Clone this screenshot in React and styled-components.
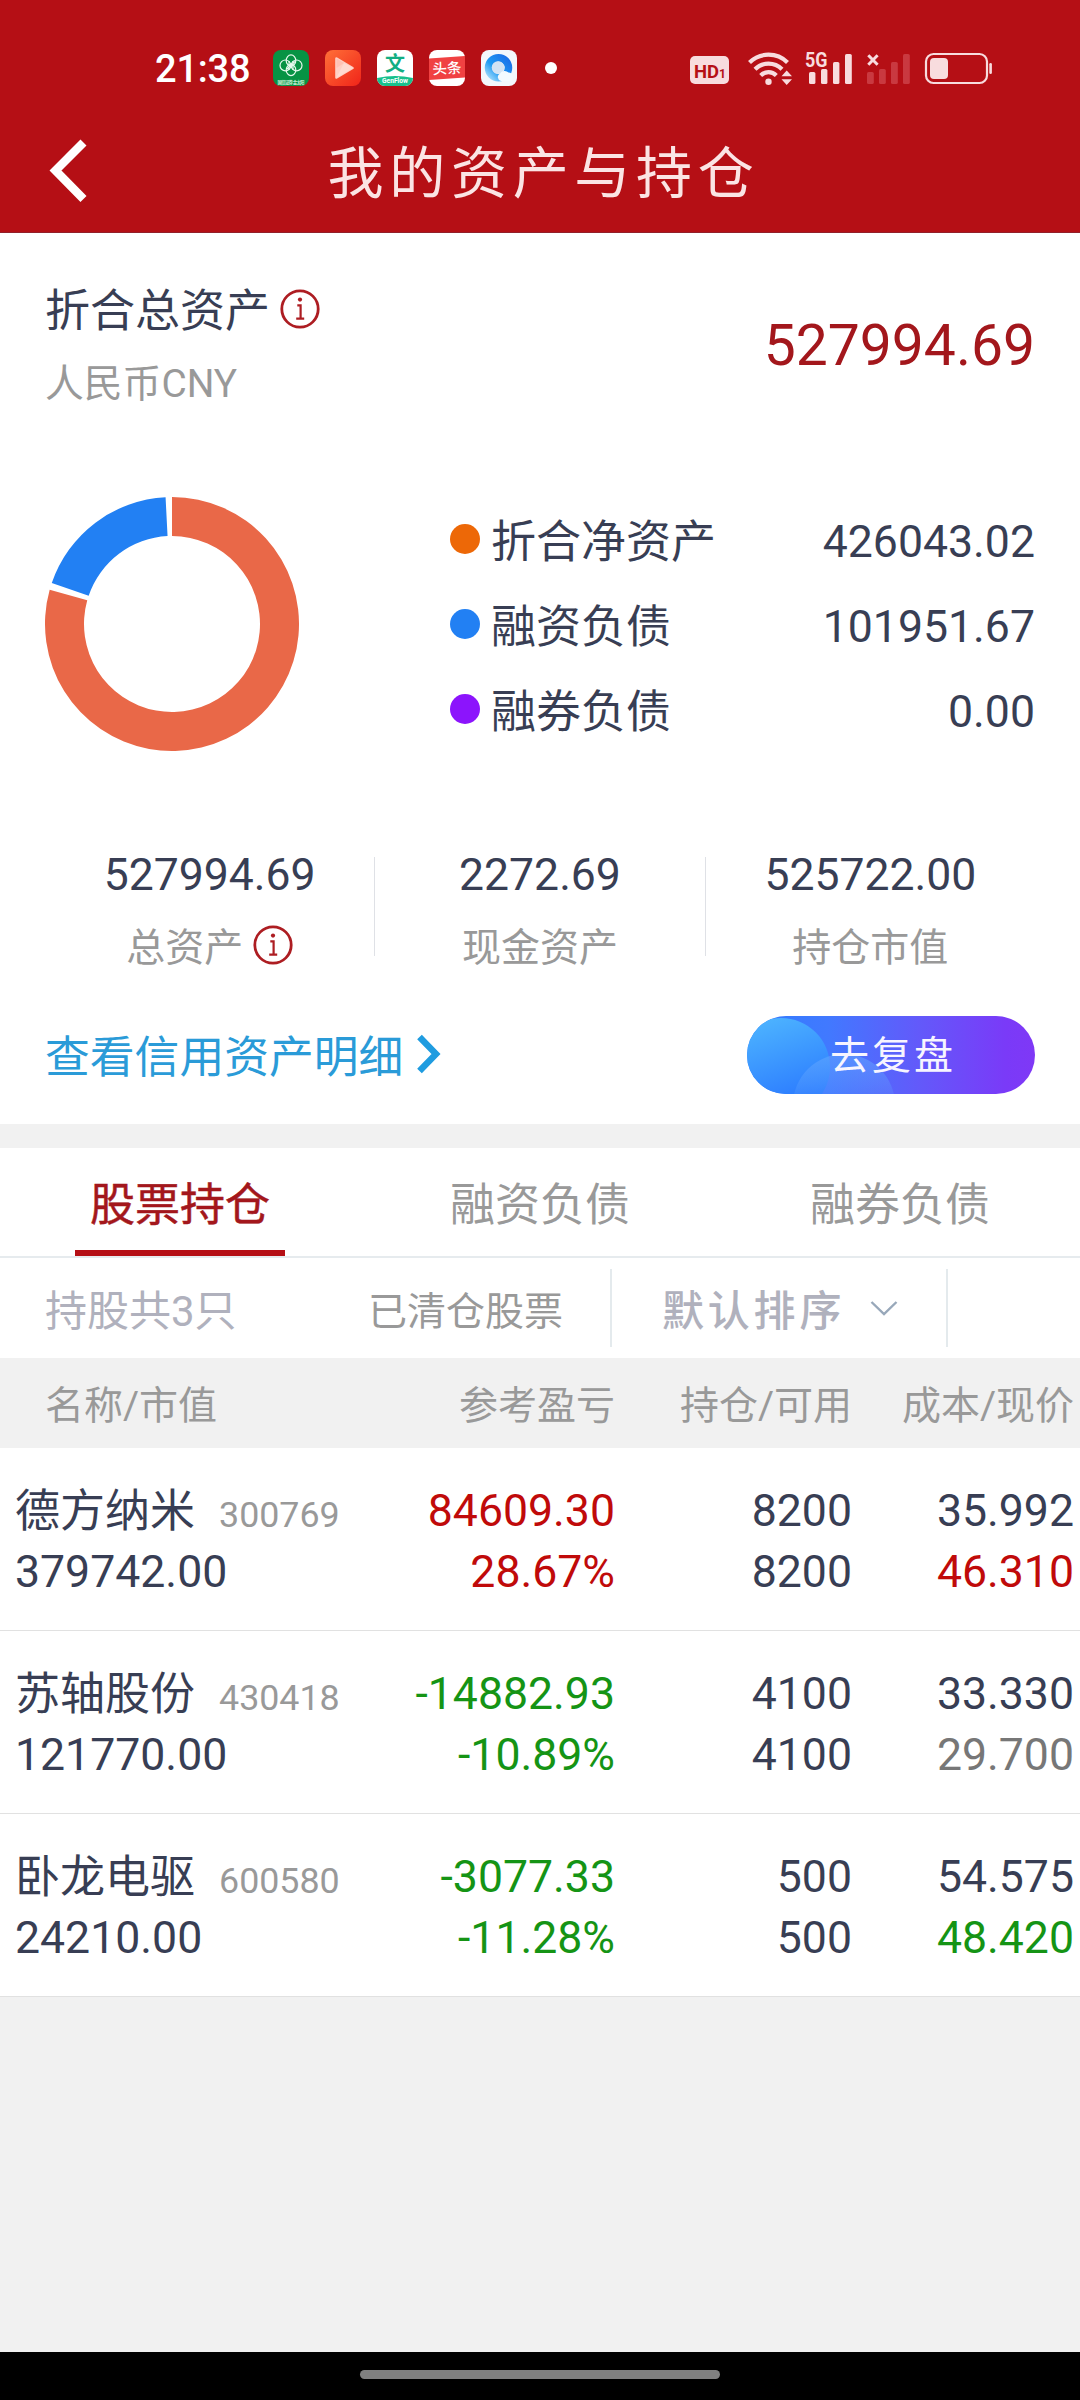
import React from 'react';
import styled, { createGlobalStyle } from 'styled-components';

const GlobalStyle = createGlobalStyle`
	* {
		box-sizing: border-box;
	}
	body {
		margin: 0;
		background: #f1f1f1;
		font-family: Roboto, 'Noto Sans CJK SC', sans-serif;
		color: #383e54;
	}
`;

const Page = styled.div`
	width: 1080px;
	height: 2400px;
	display: flex;
	flex-direction: column;
	background: #f1f1f1;
	overflow: hidden;
`;

const Header = styled.header`
	height: 233px;
	background: #b50f15;
	border-bottom: 1px solid #92202a;
`;

const StatusBar = styled.div`
	height: 110px;
	padding: 26px 87px 0 155px;
	display: flex;
	align-items: center;
	justify-content: space-between;
`;

const StatusGroup = styled.div`
	display: flex;
	align-items: center;
`;

const Time = styled.span`
	width: 118px;
	padding-top: 2px;
	color: #fff;
	font-size: 38px;
	font-weight: 500;
	line-height: 44px;
	letter-spacing: -0.2px;
`;

const AppIcon = styled.svg`
	width: 36px;
	height: 36px;
	margin-right: 16px;
`;

const MoreDot = styled.span`
	width: 12px;
	height: 12px;
	margin-left: 12px;
	border-radius: 50%;
	background: #fff;
`;

const NavBar = styled.nav`
	height: 122px;
	display: grid;
	grid-template-columns: 150px 1fr 150px;
	align-items: center;
`;

const BackIcon = styled.svg`
	width: 40px;
	height: 64px;
	margin-left: 48px;
`;

const Title = styled.h1`
	margin: 5px 0 0;
	padding-left: 7px;
	text-align: center;
	color: #fbe4e4;
	font-size: 56px;
	font-weight: 400;
	letter-spacing: 5.7px;
	line-height: 80px;
`;

const Summary = styled.section`
	height: 891px;
	padding: 47px 45px 0;
	background: #fff;
`;

const SummaryHead = styled.div`
	display: flex;
	justify-content: space-between;
	align-items: center;
`;

const SummaryLabel = styled.div`
	display: flex;
	align-items: center;
	font-size: 45px;
	line-height: 66px;
	height: 64px;
`;

const InfoIcon = styled.svg`
	width: 40px;
	height: 40px;
	margin: 0 0 ${props => props.$lift || 6}px 10px;
`;

const Currency = styled.div`
	margin-top: 12px;
	font-size: 38.8px;
	line-height: 56px;
	color: #999;
`;

const TotalAmount = styled.div`
	font-size: 57px;
	line-height: 64px;
	color: #a3171c;
`;

const ChartRow = styled.div`
	margin-top: 85px;
	height: 257px;
	display: flex;
	justify-content: space-between;
`;

const Donut = styled.svg`
	width: 254px;
	height: 254px;
`;

const Legend = styled.ul`
	width: 585px;
	margin: 2px 0 0;
	padding: 0;
	list-style: none;
`;

const LegendItem = styled.li`
	height: 85px;
	display: flex;
	align-items: center;
`;

const LegendDot = styled.span`
	width: 30px;
	height: 30px;
	margin: 0 11px 5px 0;
	border-radius: 50%;
	background: ${props => props.$color};
`;

const LegendName = styled.span`
	font-size: 45px;
	line-height: 60px;
	padding-top: 2px;
`;

const LegendValue = styled.span`
	margin-left: auto;
	font-size: 44.6px;
	line-height: 60px;
`;

const Stats = styled.div`
	margin-top: 93px;
	height: 128px;
	display: flex;
`;

const Stat = styled.div`
	flex: 1;
	display: flex;
	flex-direction: column;
	align-items: center;
`;

const StatValue = styled.div`
	font-size: 44.5px;
	line-height: 56px;
`;

const StatLabel = styled.div`
	margin-top: 18px;
	display: flex;
	align-items: center;
	font-size: 39px;
	line-height: 54px;
	color: #999;
`;

const StatDivider = styled.div`
	width: 1px;
	height: 99px;
	margin-top: 10px;
	background: #dfe1e6;
`;

const Actions = styled.div`
	margin-top: 41px;
	height: 78px;
	display: flex;
	justify-content: space-between;
	align-items: center;
`;

const DetailLink = styled.a`
	display: flex;
	align-items: center;
	color: #2a9bd8;
	font-size: 44.8px;
	line-height: 60px;
	padding-top: 6px;
`;

const LinkArrow = styled.svg`
	width: 26px;
	height: 40px;
	margin: 0 0 8px 13px;
`;

const ReviewButton = styled.button`
	position: relative;
	width: 288px;
	height: 78px;
	padding: 0;
	border: 0;
	border-radius: 39px;
	overflow: hidden;
	background: linear-gradient(90deg, #2f7dff 0%, #4179ff 28%, #6359fa 60%, #7a3af8 90%, #7f38f6 100%);
	font-family: inherit;
`;

const ButtonArt = styled.svg`
	position: absolute;
	left: 0;
	top: 0;
	width: 288px;
	height: 78px;
`;

const ButtonText = styled.span`
	position: relative;
	padding-left: 4px;
	color: #f7f5ff;
	font-size: 39px;
	letter-spacing: 3px;
	line-height: 80px;
`;

const Tabs = styled.div`
	margin-top: 24px;
	height: 110px;
	display: flex;
	background: #fff;
	border-bottom: 2px solid #e6ebee;
`;

const Tab = styled.div`
	width: 360px;
	height: 108px;
	display: flex;
	flex-direction: column;
	align-items: center;
	justify-content: space-between;
	padding-top: 26px;
	font-size: 45px;
	line-height: 64px;
	color: ${props => (props.$active ? '#a3171c' : '#999')};
	-webkit-text-stroke: ${props => (props.$active ? '0.5px' : '0')};
	&::after {
		content: '';
		width: 210px;
		height: 6px;
		background: ${props => (props.$active ? '#b50f15' : 'transparent')};
	}
`;

const Filters = styled.div`
	height: 100px;
	display: flex;
	align-items: center;
	padding-left: 45px;
	background: #fff;
`;

const HoldCount = styled.div`
	width: 323px;
	padding-top: 8px;
	font-size: 42px;
	line-height: 60px;
	color: #b0b1bd;
`;

const Cleared = styled.div`
	width: 242px;
	padding-top: 8px;
	font-size: 39px;
	line-height: 60px;
	color: #999;
`;

const FilterDivider = styled.div`
	width: 2px;
	height: 78px;
	background: #e4eaed;
`;

const Sort = styled.div`
	width: 334px;
	padding-left: 50px;
	display: flex;
	align-items: center;
	color: #b0b1bd;
	font-size: 42px;
	font-weight: 500;
	letter-spacing: 3.8px;
	line-height: 60px;
	span {
		padding-top: 8px;
	}
	svg {
		width: 28px;
		height: 18px;
		margin-left: 25px;
	}
`;

const Grid = styled.div`
	display: grid;
	grid-template-columns: 380px 235px 237px 222px;
`;

const TableHead = styled(Grid)`
	height: 90px;
	padding-top: 6px;
	font-size: 39px;
	line-height: 84px;
	color: #999;
	text-align: right;
`;

const HeadName = styled.span`
	padding-left: 45px;
	text-align: left;
`;

const StockRow = styled(Grid)`
	height: 183px;
	padding-top: 33px;
	background: #fff;
	border-bottom: 1px solid #e1e1e1;
	font-size: 44.6px;
	line-height: 61px;
`;

const NameCell = styled.div`
	padding-left: 15px;
`;

const NameLine = styled.div`
	height: 61px;
	display: flex;
	align-items: baseline;
	font-size: 45px;
`;

const Code = styled.span`
	margin-left: 24px;
	font-size: 35.8px;
	color: #999;
`;

const Cell = styled.div`
	text-align: right;
	color: ${props => props.$color || '#383e54'};
`;

const Line = styled.div`
	height: 61px;
	color: ${props => props.$color || 'inherit'};
`;

const GestureBar = styled.div`
	height: 48px;
	margin-top: auto;
	padding-top: 18px;
	background: #000;
	&::after {
		content: '';
		display: block;
		width: 360px;
		height: 9px;
		margin: 0 auto;
		border-radius: 5px;
		background: #808080;
	}
`;

const RED = '#c00a0a';
const GREEN = '#159415';

const legend = [
	{ name: '折合净资产', value: '426043.02', color: '#ed6807' },
	{ name: '融资负债', value: '101951.67', color: '#2280f3' },
	{ name: '融券负债', value: '0.00', color: '#8c14fc' },
];

const stocks = [
	{
		name: '德方纳米',
		code: '300769',
		market: '379742.00',
		profit: '84609.30',
		rate: '28.67%',
		hold: '8200',
		cost: '35.992',
		price: '46.310',
		color: RED,
		priceColor: RED,
	},
	{
		name: '苏轴股份',
		code: '430418',
		market: '121770.00',
		profit: '-14882.93',
		rate: '-10.89%',
		hold: '4100',
		cost: '33.330',
		price: '29.700',
		color: GREEN,
		priceColor: '#777',
	},
	{
		name: '卧龙电驱',
		code: '600580',
		market: '24210.00',
		profit: '-3077.33',
		rate: '-11.28%',
		hold: '500',
		cost: '54.575',
		price: '48.420',
		color: GREEN,
		priceColor: GREEN,
	},
];

// ring segment between two angles, clockwise from 12 o'clock
const ringPath = (from, to, outer = 127, inner = 88) => {
	const point = (r, deg) => {
		const rad = (deg * Math.PI) / 180;
		return `${127 + r * Math.sin(rad)} ${127 - r * Math.cos(rad)}`;
	};
	const large = to - from > 180 ? 1 : 0;
	return `M${point(outer, from)}A${outer} ${outer} 0 ${large} 1 ${point(outer, to)}L${point(inner, to)}A${inner} ${inner} 0 ${large} 0 ${point(inner, from)}Z`;
};

const Info = ({ lift }) => (
	<InfoIcon viewBox="0 0 40 40" fill="none" $lift={lift}>
		<circle cx="20" cy="20" r="18.2" stroke="#ad1d22" strokeWidth="2.8" />
		<circle cx="20" cy="10.6" r="2.1" fill="#ad1d22" />
		<path d="M17.3 16.4H20.6V29.5M16.2 29.6H24.2" stroke="#ad1d22" strokeWidth="2.2" />
	</InfoIcon>
);

const AppIcons = () => (
	<>
		<AppIcon viewBox="0 0 36 36">
			<rect width="36" height="36" rx="8" fill="#079344" />
			<g fill="none" stroke="#e6f8ed" strokeWidth="1.2">
				<ellipse cx="18" cy="10.5" rx="4.8" ry="5.6" />
				<ellipse cx="18" cy="20" rx="4.8" ry="5.6" />
				<circle cx="12.4" cy="15.4" r="5.4" />
				<circle cx="23.6" cy="15.4" r="5.4" />
				<path d="M16 11V20M20 11V20M14 19L22 11.5" />
			</g>
			<text x="18" y="34" fontSize="4.4" fontWeight="700" fill="#c9efd8" textAnchor="middle" textLength="27">
				国信证券 金太阳
			</text>
		</AppIcon>
		<AppIcon viewBox="0 0 36 36">
			<defs>
				<linearGradient id="play" x1="0" y1="0" x2="1" y2="1">
					<stop offset="0" stopColor="#ff7038" />
					<stop offset="1" stopColor="#f02419" />
				</linearGradient>
			</defs>
			<rect width="36" height="36" rx="8" fill="url(#play)" />
			<path d="M11.5 8.5L27.5 18L11.5 27.5Z" fill="#ffd0c4" stroke="#ffd0c4" strokeWidth="2.6" strokeLinejoin="round" />
			<path d="M11.5 8.5L19 13L11.5 18Z" fill="#ffb9a8" opacity=".6" />
			<path d="M19 13L28 18L11.5 27.5Z" fill="#ffe2da" opacity=".6" />
		</AppIcon>
		<AppIcon viewBox="0 0 36 36">
			<defs>
				<clipPath id="flow">
					<rect width="36" height="36" rx="8" />
				</clipPath>
			</defs>
			<g clipPath="url(#flow)">
				<rect width="36" height="36" fill="#fff" />
				<path d="M0 28Q18 24 36 28V36H0Z" fill="#18c08c" />
			</g>
			<text x="18" y="21" fontSize="20" fontWeight="700" fill="#12ae83" textAnchor="middle">
				文
			</text>
			<text x="18" y="33.4" fontSize="6.4" fontWeight="700" fill="#fff" textAnchor="middle" textLength="26" lengthAdjust="spacingAndGlyphs">
				GenFlow
			</text>
		</AppIcon>
		<AppIcon viewBox="0 0 36 36">
			<rect width="36" height="36" rx="8" fill="#fff" />
			<path d="M0 8.5L36 6V27.5L0 30Z" fill="#f04142" />
			<text x="18" y="23.5" fontSize="14.5" fontWeight="500" fill="#fff" textAnchor="middle" transform="rotate(-3 18 18)">
				头条
			</text>
		</AppIcon>
		<AppIcon viewBox="0 0 36 36">
			<defs>
				<linearGradient id="ring" x1="1" y1="0" x2="0" y2="1">
					<stop offset="0" stopColor="#1b6fe8" />
					<stop offset=".6" stopColor="#1f9af2" />
					<stop offset="1" stopColor="#9bd8fb" />
				</linearGradient>
			</defs>
			<rect width="36" height="36" rx="8" fill="#f3f7fc" />
			<circle cx="17.5" cy="17.8" r="10" fill="none" stroke="url(#ring)" strokeWidth="7.5" />
			<circle cx="17" cy="17.5" r="6.3" fill="#d3e3f3" />
			<path d="M20 31A4 4 0 0 1 19 23.5A5.5 5.5 0 0 1 27.5 22.5A4.4 4.4 0 0 1 29 31Z" fill="#f3faff" />
		</AppIcon>
	</>
);

const SystemIcons = () => (
	<svg width="303" height="36" viewBox="0 0 303 36" fill="#f8dcde">
		<rect y="6" width="39" height="28" rx="5" />
		<text x="4" y="27.5" fontSize="18.5" fontWeight="700" fill="#b50f15">
			HD<tspan fontSize="12">1</tspan>
		</text>
		<g fill="none" stroke="#f8dcde" strokeWidth="4.2">
			<path d="M59.5 12.5A27 27 0 0 1 97.5 12.5" />
			<path d="M65 19.2A19 19 0 0 1 92 19.2" />
			<path d="M70.7 25.4A11 11 0 0 1 86.3 25.4" />
		</g>
		<circle cx="78.5" cy="31.8" r="3.2" />
		<path d="M91.5 26.2L96.7 20.5L102 26.2ZM91.5 29.2L96.7 35L102 29.2Z" />
		<text x="115" y="16.5" fontSize="19.5" fontWeight="700" textLength="22.5" lengthAdjust="spacingAndGlyphs">5G</text>
		<rect x="119" y="22" width="6.4" height="12" rx="1.6" />
		<rect x="131" y="19" width="6.4" height="15" rx="1.6" />
		<rect x="143" y="12" width="6.4" height="22" rx="1.6" />
		<rect x="155" y="4" width="6.8" height="30" rx="1.6" />
		<path d="M178.3 5.3L187.6 14.7M187.6 5.3L178.3 14.7" stroke="#f8dcde" strokeWidth="3" />
		<g fill="#c93940">
			<rect x="177" y="22" width="6.8" height="12" rx="1.6" />
			<rect x="189" y="19" width="6.8" height="15" rx="1.6" />
			<rect x="201" y="12" width="6.8" height="22" rx="1.6" />
			<rect x="213" y="4" width="6.8" height="30" rx="1.6" />
		</g>
		<rect x="236" y="4" width="61" height="29" rx="7.5" fill="none" stroke="#f8dcde" strokeWidth="2.2" />
		<rect x="240" y="8" width="18" height="21" rx="4" />
		<rect x="299.3" y="13" width="2.6" height="11" rx="1.3" />
	</svg>
);

const App = () => {
	return (
		<Page>
			<GlobalStyle />
			<Header>
				<StatusBar>
					<StatusGroup>
						<Time>21:38</Time>
						<AppIcons />
						<MoreDot />
					</StatusGroup>
					<SystemIcons />
				</StatusBar>
				<NavBar>
					<BackIcon viewBox="0 0 40 64" fill="none">
						<path d="M35.5 3.5L7.5 31.5L35.5 60" stroke="#fff" strokeWidth="8.5" />
					</BackIcon>
					<Title>我的资产与持仓</Title>
				</NavBar>
			</Header>

			<Summary>
				<SummaryHead>
					<div>
						<SummaryLabel>
							折合总资产
							<Info />
						</SummaryLabel>
						<Currency>人民币CNY</Currency>
					</div>
					<TotalAmount>527994.69</TotalAmount>
				</SummaryHead>
				<ChartRow>
					<Donut viewBox="0 0 254 254">
						<path d={ringPath(0, 285.6)} fill="#e96848" />
						<path d={ringPath(288.8, 357.1)} fill="#2280f3" />
					</Donut>
					<Legend>
						{legend.map(item => (
							<LegendItem key={item.name}>
								<LegendDot $color={item.color} />
								<LegendName>{item.name}</LegendName>
								<LegendValue>{item.value}</LegendValue>
							</LegendItem>
						))}
					</Legend>
				</ChartRow>
				<Stats>
					<Stat>
						<StatValue>527994.69</StatValue>
						<StatLabel>
							总资产
							<Info lift={7} />
						</StatLabel>
					</Stat>
					<StatDivider />
					<Stat>
						<StatValue>2272.69</StatValue>
						<StatLabel>现金资产</StatLabel>
					</Stat>
					<StatDivider />
					<Stat>
						<StatValue>525722.00</StatValue>
						<StatLabel>持仓市值</StatLabel>
					</Stat>
				</Stats>
				<Actions>
					<DetailLink>
						查看信用资产明细
						<LinkArrow viewBox="0 0 26 40" fill="none">
							<path d="M3.5 3L20 20L3.5 37" stroke="#1f9ce0" strokeWidth="6.5" />
						</LinkArrow>
					</DetailLink>
					<ReviewButton>
						<ButtonArt viewBox="0 0 288 78">
							<defs>
								<linearGradient id="bubble" x1="0.3" y1="0" x2="0.6" y2="0.85">
									<stop offset="0" stopColor="#4db4ff" />
									<stop offset="1" stopColor="#2c7cff" />
								</linearGradient>
								<linearGradient id="bubbleSmall" x1="0" y1="0" x2="0" y2="1">
									<stop offset="0" stopColor="#66a8ff" stopOpacity=".55" />
									<stop offset=".45" stopColor="#66a8ff" stopOpacity=".15" />
								</linearGradient>
							</defs>
							<circle cx="34" cy="51" r="49" fill="url(#bubble)" />
							<circle cx="97" cy="89" r="51" fill="url(#bubbleSmall)" />
						</ButtonArt>
						<ButtonText>去复盘</ButtonText>
					</ReviewButton>
				</Actions>
			</Summary>

			<Tabs>
				<Tab $active>股票持仓</Tab>
				<Tab>融资负债</Tab>
				<Tab>融券负债</Tab>
			</Tabs>
			<Filters>
				<HoldCount>持股共3只</HoldCount>
				<Cleared>已清仓股票</Cleared>
				<FilterDivider />
				<Sort>
					<span>默认排序</span>
					<svg viewBox="0 0 28 18" fill="none">
						<path d="M1.5 3L14 15L26.5 3" stroke="#98a8ba" strokeWidth="2.4" />
					</svg>
				</Sort>
				<FilterDivider />
			</Filters>
			<TableHead>
				<HeadName>名称/市值</HeadName>
				<span>参考盈亏</span>
				<span>持仓/可用</span>
				<span>成本/现价</span>
			</TableHead>
			{stocks.map(stock => (
				<StockRow key={stock.code}>
					<NameCell>
						<NameLine>
							{stock.name}
							<Code>{stock.code}</Code>
						</NameLine>
						<Line>{stock.market}</Line>
					</NameCell>
					<Cell $color={stock.color}>
						<Line>{stock.profit}</Line>
						<Line>{stock.rate}</Line>
					</Cell>
					<Cell>
						<Line>{stock.hold}</Line>
						<Line>{stock.hold}</Line>
					</Cell>
					<Cell>
						<Line>{stock.cost}</Line>
						<Line $color={stock.priceColor}>{stock.price}</Line>
					</Cell>
				</StockRow>
			))}
			<GestureBar />
		</Page>
	);
};

export default App;
